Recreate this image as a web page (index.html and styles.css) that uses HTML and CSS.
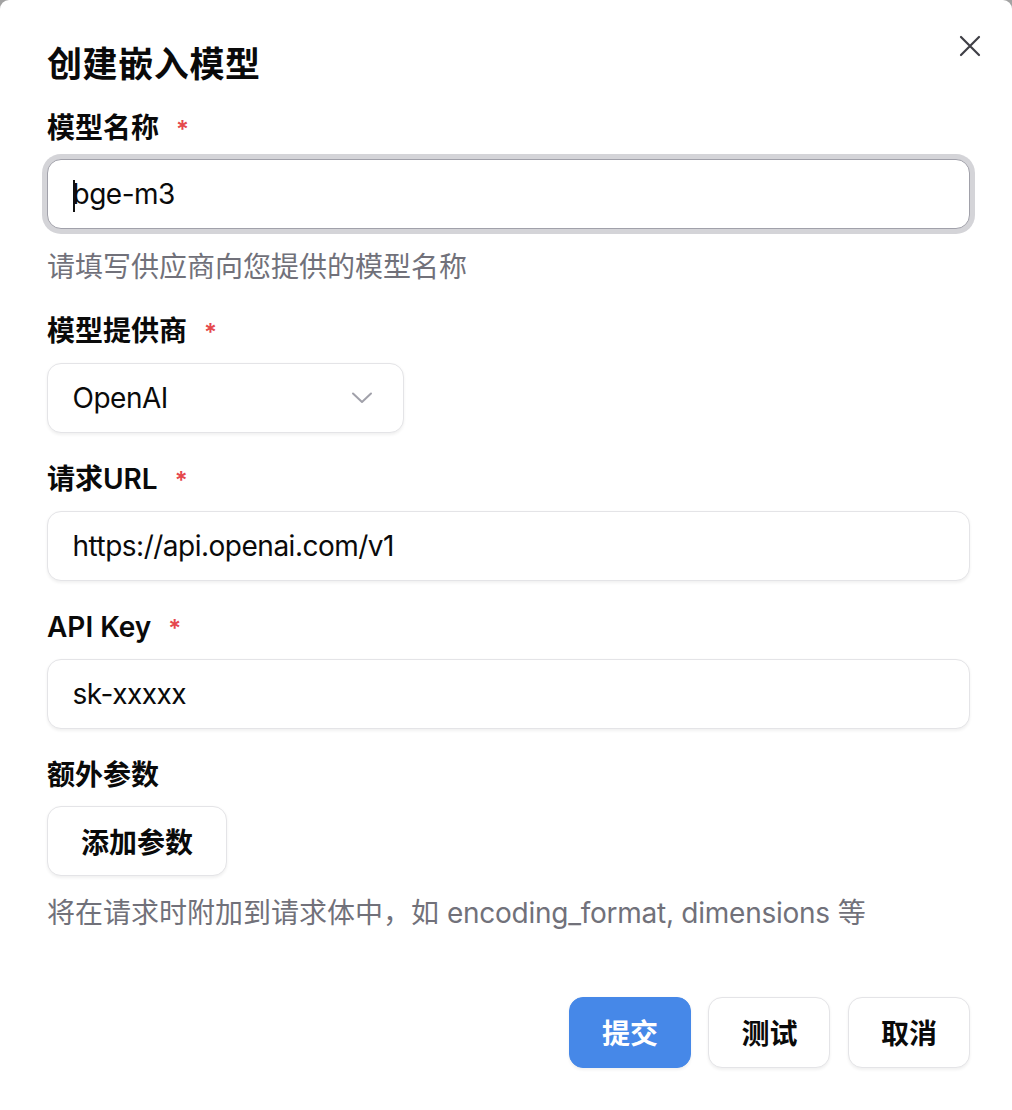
FILE: index.html
```html
<!DOCTYPE html>
<html lang="zh-CN">
<head>
<meta charset="utf-8">
<title>创建嵌入模型</title>
<link rel="stylesheet" href="styles.css">
</head>
<body>
<div class="dialog">
  <button class="close" aria-label="关闭">
    <svg width="22" height="22" viewBox="0 0 22 22"><path d="M2 2 L20 20 M20 2 L2 20" stroke="#3f3f46" stroke-width="2.2" stroke-linecap="round" fill="none"/></svg>
  </button>
  <h1 class="title">创建嵌入模型</h1>
  <form class="form">
    <div class="field">
      <label class="label">模型名称<span class="req">*</span></label>
      <div class="input focused"><span class="caret"></span>bge-m3</div>
      <p class="hint">请填写供应商向您提供的模型名称</p>
    </div>
    <div class="field">
      <label class="label">模型提供商<span class="req">*</span></label>
      <div class="select">
        <span>OpenAI</span>
        <svg width="22" height="12" viewBox="0 0 22 12"><path d="M2 1.5 L11 10 L20 1.5" stroke="#a1a1aa" stroke-width="2" fill="none" stroke-linecap="round" stroke-linejoin="round"/></svg>
      </div>
    </div>
    <div class="field">
      <label class="label">请求URL<span class="req">*</span></label>
      <div class="input">https://api.openai.com/v1</div>
    </div>
    <div class="field">
      <label class="label">API Key<span class="req">*</span></label>
      <div class="input">sk-xxxxx</div>
    </div>
    <div class="field">
      <label class="label">额外参数</label>
      <div><button type="button" class="btn">添加参数</button></div>
      <p class="hint">将在请求时附加到请求体中，如 <span class="latin">encoding_format, dimensions</span> 等</p>
    </div>
  </form>
  <div class="footer">
    <button type="button" class="btn primary">提交</button>
    <button type="button" class="btn">测试</button>
    <button type="button" class="btn">取消</button>
  </div>
</div>
</body>
</html>
```

FILE: styles.css
```css
* { box-sizing: border-box; }
html, body { margin: 0; padding: 0; }
body {
  background: #a3a3a3;
  font-family: "Inter", "Noto Sans CJK SC", sans-serif;
  color: #0a0a0a;
}
.dialog {
  position: relative;
  background: #fff;
  border-radius: 9px 9px 0 0;
  min-height: 1110px;
  padding: 43px 42px 40px 47px;
}
.close {
  position: absolute;
  top: 35px;
  right: 31px;
  padding: 0;
  border: 0;
  background: none;
  display: flex;
}
.title {
  margin: 0;
  font-size: 35px;
  line-height: 42px;
  font-weight: 700;
  letter-spacing: 0.6px;
}
.form {
  margin-top: 25.5px;
  display: flex;
  flex-direction: column;
  gap: 29.5px;
}
.field {
  display: flex;
  flex-direction: column;
  gap: 12.5px;
}
.label {
  font-size: 28px;
  line-height: 35px;
  font-weight: 600;
}
.req {
  color: #e5484d;
  margin-left: 17px;
  font-size: 24px;
  font-weight: 600;
}
.input, .select {
  height: 70px;
  border: 1.5px solid #e4e4e7;
  border-radius: 14px;
  padding: 0 24.5px;
  font-size: 28px;
  letter-spacing: -0.5px;
  display: flex;
  align-items: center;
  box-shadow: 0 1.5px 3px rgba(0,0,0,0.06);
  background: #fff;
  position: relative;
}
.input.focused {
  border-color: #a1a1aa;
  box-shadow: 0 0 0 5px #d4d4d8;
}
.caret {
  position: absolute;
  left: 25px;
  top: 20px;
  width: 2px;
  height: 32px;
  background: #111;
}
.select {
  width: 357px;
  justify-content: space-between;
  padding-right: 30px;
}
.hint {
  margin: 8px 0 0;
  font-size: 28px;
  line-height: 35px;
  color: #71717a;
}
.latin { letter-spacing: -0.25px; }
.btn {
  font-family: inherit;
  height: 71px;
  padding: 0 32px;
  border: 1.5px solid #e4e4e7;
  border-radius: 14px;
  background: #fff;
  color: #0a0a0a;
  font-size: 28px;
  font-weight: 600;
  box-shadow: 0 1.5px 3px rgba(0,0,0,0.06);
}
.field .btn { padding: 0 33px; height: 70px; }
.footer {
  margin-top: 65.5px;
  display: flex;
  justify-content: flex-end;
  gap: 17.5px;
}
.btn.primary {
  background: #4688e8;
  border-color: #4688e8;
  color: #fff;
}
```
